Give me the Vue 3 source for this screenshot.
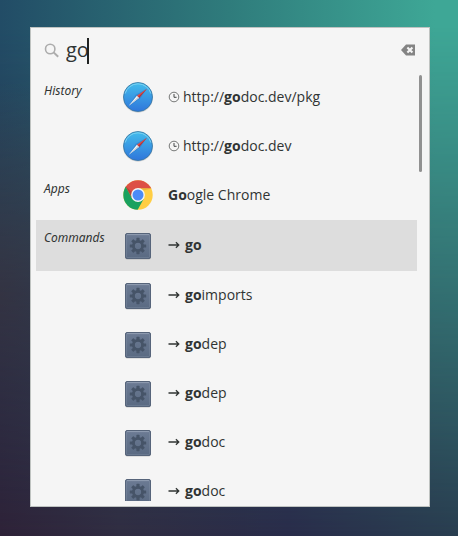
<script setup>
import { ref } from 'vue'

const query = ref('go')
const selected = ref(3)

const results = [
  { group: 'History', icon: 'compass', mark: 'clock', before: 'http://', match: 'go', after: 'doc.dev/pkg' },
  { group: '', icon: 'compass', mark: 'clock', before: 'http://', match: 'go', after: 'doc.dev' },
  { group: 'Apps', icon: 'chrome', mark: '', before: '', match: 'Go', after: 'ogle Chrome' },
  { group: 'Commands', icon: 'gear', mark: 'arrow', before: '', match: 'go', after: '' },
  { group: '', icon: 'gear', mark: 'arrow', before: '', match: 'go', after: 'imports' },
  { group: '', icon: 'gear', mark: 'arrow', before: '', match: 'go', after: 'dep' },
  { group: '', icon: 'gear', mark: 'arrow', before: '', match: 'go', after: 'dep' },
  { group: '', icon: 'gear', mark: 'arrow', before: '', match: 'go', after: 'doc' },
  { group: '', icon: 'gear', mark: 'arrow', before: '', match: 'go', after: 'doc' },
]

const teeth = [0, 45, 90, 135, 180, 225, 270, 315]
</script>

<template>
  <main class="desktop">
    <svg class="defs" aria-hidden="true">
      <defs>
        <linearGradient id="sky" x1="0" y1="0" x2="0" y2="1">
          <stop offset="0" stop-color="#43bdec" />
          <stop offset="1" stop-color="#2f76db" />
        </linearGradient>
        <linearGradient id="steel" x1="0" y1="0" x2="0" y2="1">
          <stop offset="0" stop-color="#6c7b94" />
          <stop offset="1" stop-color="#5a6a82" />
        </linearGradient>
        <clipPath id="disc"><circle cx="16" cy="16" r="14.7" /></clipPath>
      </defs>
    </svg>

    <section class="panel">
      <form class="search" role="search" @submit.prevent>
        <label class="lens" for="query" aria-label="Search">
          <svg width="16" height="16" viewBox="0 0 16 16">
            <circle cx="6.2" cy="6" r="4.7" fill="none" stroke="#acacac" stroke-width="1.6" />
            <path d="M9.6 9.4 14.2 13.8" stroke="#acacac" stroke-width="2" />
          </svg>
        </label>
        <input id="query" v-model="query" class="query" type="text" size="2" autocomplete="off" />
        <span class="caret"></span>
        <button class="clear" type="button" aria-label="Clear" @click="query = ''">
          <svg width="16" height="16" viewBox="0 0 16 16">
            <path d="M6 1.6H15V12.4H6L1 7Z" fill="#848484" />
            <path d="M7.4 4.4 12.4 9.6M12.4 4.4 7.4 9.6" stroke="#f5f5f5" stroke-width="2.1" />
          </svg>
        </button>
      </form>

      <div class="body">
        <ul class="results">
          <li v-for="(item, i) in results" :key="i">
            <button class="row" :class="{ active: i === selected }" type="button" @click="selected = i">
              <span class="group">{{ item.group }}</span>
              <span class="icon">
                <svg v-if="item.icon === 'compass'" width="32" height="32" viewBox="0 1 32 32">
                  <circle cx="16" cy="16.9" r="14.8" fill="#000" opacity=".15" />
                  <circle cx="16" cy="16" r="14.5" fill="url(#sky)" stroke="#35749f" stroke-width=".8" />
                  <path d="M3.1 12.6A13.4 13.4 0 0 1 28.9 12.6" fill="none" stroke="#8bd8f2" stroke-width=".8" />
                  <path d="M24.8 7.8 13.8 13.8 6.9 25.1 18.1 17.4Z" fill="#215faf" opacity=".35" />
                  <path d="M25 7.8 14.9 14.8 17 17.1Z" fill="#e84b41" />
                  <path d="M25 7.8 16 15.9 17 17.1Z" fill="#a9353e" />
                  <path d="M14.9 14.8 17 17.1 6.8 24.8Z" fill="#f4f5f6" />
                  <path d="M16 15.9 17 17.1 6.8 24.8Z" fill="#bdcad6" />
                </svg>
                <svg v-else-if="item.icon === 'chrome'" width="32" height="32" viewBox="0 1 32 32">
                  <g clip-path="url(#disc)">
                    <rect width="32" height="32" fill="#ffce44" />
                    <path d="M16 9.2H32V0H0V7L4 8.5 10.1 19.4Z" fill="#dd5045" />
                    <path d="M3.3 7 10.1 19.4 16 22.8 21.9 19.4 15 32H0V7Z" fill="#19a15f" />
                    <path d="M16 9.2H30L22 11.5Z" fill="#b98a2b" opacity=".3" />
                    <path d="M3.3 7 10.1 19.4 10.5 13.5Z" fill="#7e392d" opacity=".4" />
                  </g>
                  <circle cx="16" cy="16" r="6.9" fill="#f3f5f4" />
                  <circle cx="16" cy="16" r="5.5" fill="#4c8bf5" />
                </svg>
                <svg v-else width="32" height="32" viewBox="0 0 32 32">
                  <rect x="3" y="4" width="26" height="25.6" rx="2" fill="#000" opacity=".18" />
                  <rect x="3.5" y="3.5" width="25" height="25" rx="1.5" fill="url(#steel)" stroke="#56647a" />
                  <path d="M5 4.6H27" stroke="#a1adbf" stroke-width=".9" opacity=".8" />
                  <rect x="4.5" y="4.5" width="23" height="23" rx="1" fill="none" stroke="#8e9bb0" stroke-width=".6" opacity=".5" />
                  <g fill="#465468">
                    <rect v-for="a in teeth" :key="a" x="14.4" y="7.8" width="3.2" height="4.5" rx=".6" :transform="`rotate(${a} 16 16)`" />
                  </g>
                  <circle cx="16" cy="16" r="4.6" fill="none" stroke="#465468" stroke-width="2.9" />
                </svg>
              </span>
              <span class="label">
                <svg v-if="item.mark === 'clock'" class="clock" width="12" height="12" viewBox="0 0 12 12">
                  <circle cx="6" cy="6" r="4.8" fill="none" stroke="#555857" stroke-width=".8" />
                  <path d="M6 3V6.3H8.6" fill="none" stroke="#444746" />
                </svg>
                <svg v-else-if="item.mark === 'arrow'" class="arrow" width="12" height="12" viewBox="0 0 12 12">
                  <path d="M.5 6H11M7.9 3.2 10.8 6 7.9 8.8" fill="none" stroke="#303433" stroke-width="1.3" />
                </svg>
                <span>{{ item.before }}<b>{{ item.match }}</b>{{ item.after }}</span>
              </span>
            </button>
          </li>
        </ul>
        <div class="track"><div class="thumb"></div></div>
      </div>
    </section>
  </main>
</template>

<style>
body {
  margin: 0;
}
</style>

<style scoped>
.desktop {
  position: relative;
  isolation: isolate;
  box-sizing: border-box;
  display: flex;
  height: 100vh;
  padding: 27px 28px 29px 30px;
  background: linear-gradient(to right, #2e2238, #302d42 26%, #292c4a 63%, #293e50);
  color: #303433;
  font-family: "Open Sans", "Noto Sans", sans-serif;
  font-size: 14px;
}

.desktop::before {
  content: "";
  position: absolute;
  inset: 0;
  z-index: -1;
  background:
    radial-gradient(ellipse 30% 40% at 0 55%, #3a474f, transparent),
    linear-gradient(to right, #224c66, #2f7c7c 50%, #3ea796 95%);
  mask-image: linear-gradient(to bottom, #000 5%, rgba(0, 0, 0, 0.55) 48%, transparent);
}

.defs {
  position: absolute;
  width: 0;
  height: 0;
}

.panel {
  flex: 1;
  min-width: 0;
  box-sizing: border-box;
  display: flex;
  flex-direction: column;
  padding: 0 5px 5px;
  border: 1px solid #bfc3c1;
  background: #f5f5f5;
}

.search {
  display: flex;
  align-items: center;
  height: 45px;
  padding: 0 8px;
}

.lens {
  display: flex;
  margin-right: 6px;
}

.query {
  field-sizing: content;
  min-width: 0;
  padding: 0 0 2px;
  border: 0;
  outline: 0;
  background: transparent;
  color: #303433;
  caret-color: transparent;
  font: 20px/28px "Open Sans", "Noto Sans", sans-serif;
}

.caret {
  width: 2px;
  height: 26px;
  margin-left: -2px;
  background: #202322;
}

.clear {
  display: flex;
  margin-left: auto;
  padding: 0;
  border: 0;
  background: none;
}

.body {
  flex: 1;
  min-height: 0;
  display: flex;
}

.results {
  flex: 1;
  overflow: hidden;
  margin: 0;
  padding: 0;
  list-style: none;
}

.row {
  box-sizing: border-box;
  display: grid;
  grid-template-columns: 78px 32px 1fr;
  align-items: center;
  width: 100%;
  height: 49px;
  padding: 0 8px;
  border: 0;
  background: none;
  color: inherit;
  font: inherit;
  text-align: left;
}

.active {
  height: 51px;
  background: #dddddd;
}

.group {
  align-self: start;
  padding-top: 9px;
  font-family: "Noto Sans", "Open Sans", sans-serif;
  font-size: 12px;
  line-height: 18px;
  font-style: italic;
}

.icon {
  display: flex;
}

.label {
  display: flex;
  align-items: center;
  padding: 0 0 2px 14px;
  line-height: 20px;
  white-space: nowrap;
}

.clock {
  margin-right: 3px;
}

.arrow {
  margin-right: 5px;
}

.track {
  width: 7px;
}

.thumb {
  width: 3px;
  height: 97px;
  margin: 2px 0 0 2px;
  border-radius: 2px;
  background: #919191;
}
</style>
